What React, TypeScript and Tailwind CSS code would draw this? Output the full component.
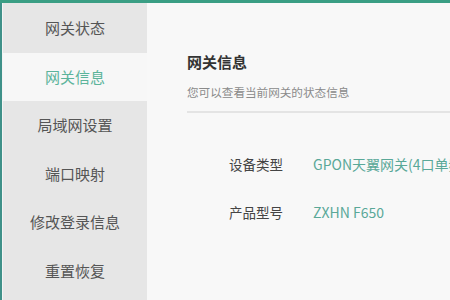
const menu = ["网关状态", "网关信息", "局域网设置", "端口映射", "修改登录信息", "重置恢复"];

const rows = [
  { label: "设备类型", value: "GPON天翼网关(4口单频)" },
  { label: "产品型号", value: "ZXHN F650" },
];

export default function App() {
  return (
    <div
      className="w-[450px] h-[300px] overflow-hidden flex flex-col bg-[#f8f8f8]"
      style={{ fontFamily: '"Noto Sans CJK SC", "Noto Sans", sans-serif' }}
    >
      {/* top bar */}
      <div className="h-[3px] shrink-0 bg-[#3a9e84]" />
      <div className="flex flex-1 min-h-0">
        <div className="w-[2px] shrink-0 bg-[#3f9189]" />
        <div className="w-[1px] shrink-0 bg-[#f4f4f4]" />
        {/* sidebar */}
        <aside className="w-[144px] shrink-0 bg-[#e6e6e6] pt-[1px]">
          {menu.map((item, i) => (
            <div
              key={item}
              className={
                i === 1
                  ? "h-[48.5px] flex items-center justify-center text-[15px] bg-[#f7f7f7] text-[#5cb49b]"
                  : "h-[48.5px] flex items-center justify-center text-[15px] text-[#555]"
              }
            >
              {item}
            </div>
          ))}
        </aside>
        {/* main */}
        <main className="flex-1 pl-[40px] pt-[48px]">
          <h2 className="text-[15px] font-bold text-[#333] leading-[22px]">网关信息</h2>
          <p className="mt-[10px] text-[11.6px] text-[#8a8a8a] leading-[18px]">您可以查看当前网关的状态信息</p>
          <div className="mt-[10px] h-[2px] bg-[#e4e4e4]" />
          <div className="pl-[42px] pt-[41px] flex flex-col gap-[27px]">
            {rows.map((r) => (
              <div key={r.label} className="flex items-center whitespace-nowrap leading-[21px]">
                <span className="w-[84px] shrink-0 text-[13.5px] text-[#444]">{r.label}</span>
                <span className="text-[14px] text-[#5aa898]">{r.value}</span>
              </div>
            ))}
          </div>
        </main>
      </div>
    </div>
  );
}
